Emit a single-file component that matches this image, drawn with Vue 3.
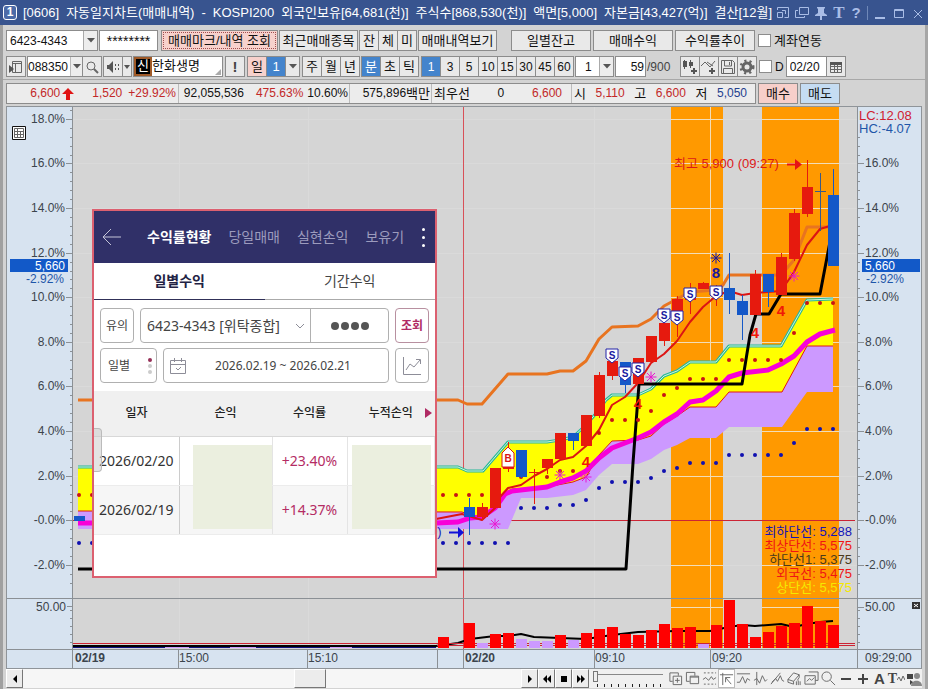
<script setup>
import { ref } from 'vue'

const titleParts = ['[0606]', '자동일지차트(매매내역)', '-', 'KOSPI200', '외국인보유[64,681(천)]', '주식수[868,530(천)]', '액면[5,000]', '자본금[43,427(억)]', '결산[12월]']
const minutes = ['1', '3', '5', '10', '15', '30', '45', '60']
const minute = ref('1')
const linked = ref(false)
const dated = ref(false)
const zoomLevel = ref(0)

const levels = [18, 16, 14, 12, 10, 8, 6, 4, 2, 0, -2]
const levelY = (p) => Math.round(520.3 - p * 22.3)
const levelText = (p) => (p === 0 ? '-0.0%' : p.toFixed(1) + '%')
const minorY = []
for (let i = -7; i <= 46; i++) minorY.push(Math.round(520.3 - i * 8.92))
const volY = [610, 618, 626, 634, 642]

// x, open/close edges, wick ends, rising?
const candles = [
  [469, 507, 517, 498, 535, 0], [482, 507, 517, 503, 520, 1], [495, 468, 508, 468, 508, 1], [508, 457, 469, 442, 472, 1],
  [521, 450, 477, 450, 478, 0], [547, 459, 468, 459, 474, 1], [560, 433, 459, 433, 459, 1], [573, 433, 441, 433, 450, 0],
  [586, 415, 446, 415, 446, 1], [599, 375, 416, 372, 418, 1], [612, 361, 376, 361, 380, 1], [625, 362, 385, 362, 393, 0],
  [638, 358, 384, 358, 384, 1], [651, 336, 362, 336, 362, 1], [664, 323, 341, 320, 346, 1], [677, 299, 311, 296, 337, 1],
  [690, 290, 300, 283, 314, 1], [703, 283, 289, 282, 289, 1], [716, 288, 296, 285, 306, 1], [729, 288, 300, 253, 314, 0],
  [742, 301, 315, 295, 340, 0], [755, 274, 315, 270, 315, 1], [768, 274, 292, 274, 307, 0], [781, 257, 295, 253, 295, 1],
  [794, 213, 259, 209, 261, 1], [807, 187, 214, 160, 217, 1], [833, 195, 266, 169, 266, 0]
]
const sells = [[612, 349], [625, 367], [638, 363], [664, 309], [677, 311], [690, 288], [716, 286]]
const fours = [[586, 467], [638, 409], [755, 338], [781, 316]]
const stars = [[495, 524], [560, 475], [586, 477], [651, 377], [794, 276]]

const xs = (a, n) => Array.from({ length: n }, (_, i) => a + i * 13)
const lowDots = [
  [79, 543], [92, 543], ...xs(443, 6).map((x) => [x, 543]), ...xs(521, 3).map((x) => [x, 508]), [560, 505], [573, 505],
  [586, 500], [599, 488], [612, 482], [625, 482], [638, 482], [651, 478], [664, 471], [677, 468], [690, 463], [703, 463],
  [716, 463], ...xs(729, 5).map((x) => [x, 455]), [794, 443], [807, 429], [820, 429], [833, 429]
]
const highDots = [
  [79, 495], [92, 495], ...xs(443, 4).map((x) => [x, 495]), [521, 477], [547, 477], [560, 471], [573, 471], [599, 433],
  [612, 420], [625, 420], [638, 420], [651, 411], [664, 395], [677, 388], [690, 379], [703, 379], [716, 379],
  ...xs(729, 5).map((x) => [x, 360]), [794, 333], [807, 303], [820, 303], [833, 303]
]
const volumes = [
  [443, 637, 1], [469, 623, 1], [482, 643, 0], [495, 634, 1], [508, 633, 1], [521, 639, 0], [534, 641, 0], [547, 641, 0],
  [560, 635, 1], [573, 640, 0], [586, 633, 1], [599, 629, 1], [612, 627, 1], [625, 634, 1], [638, 635, 1], [651, 630, 1],
  [664, 624, 1], [677, 628, 1], [690, 627, 1], [703, 644, 0], [716, 625, 1], [729, 600, 1], [742, 624, 1], [755, 637, 1],
  [768, 632, 1], [781, 626, 1], [794, 623, 1], [807, 606, 1], [820, 621, 1], [833, 625, 1]
]

const upper = '458,467 467,471 483,471 508,442 547,442 560,440 573,437 586,425 599,410 606,400 612,395 638,395 651,389 664,376 677,371 690,362 716,362 729,346 781,346 807,300 833,299'
const lower = '833,346 807,346 782,392 729,392 716,407 690,407 677,416 664,424 651,436 638,440 612,441 599,455 586,477 573,482 547,487 512,489 495,508 482,519 462,512'

const times = [
  [75, '02/19', true], [179, '15:00', false], [308, '15:10', false], [465, '02/20', true], [595, '09:10', false], [712, '09:20', false]
]
const legend = [
  [536, '#1414b8', '최하단선: 5,288'], [550, '#f01414', '최상단선: 5,575'], [564, '#4a3a1c', '하단선1: 5,375'],
  [578, '#f01414', '외국선: 5,475'], [592, '#f5e800', '상단선: 5,575']
]

const tools = [
  ['창 추가', 'M2 2h9v3M2 2v9h3M5.5 5.5h9v9h-9zM10 7.500v5M7.500 10h5'],
  ['창 복사', 'M5 11H1.500V1.500h9V5M5.500 5.500h9v8h-9zM5.500 6.500h9'],
  ['추세', 'M2 2h2m2 0h2m2 0h2m2 0h1M2 14h2m2 0h2m2 0h2m2 0h1M1 9l3-2 3 3 3-4 2 3 3-2'],
  ['기준', 'M1 4h14M4 2v13M7 7h5M7 7v5M7 7l6 7'],
  ['수평', 'M1 3h14M1 12h3l3-6 3 7 2-5 3 2'],
  ['수직', 'M4 1v14M1 10l3-2 3 5 3-8 3 6 2-2'],
  ['사선', 'M1 14L11 2M2 12l4-4 2 3 3-6 2 5 2 1'],
  ['모두 지우기', 'M1 9l6-7 6 2-6 7zM1 9v3l6 2v-3M13 4v3l-2 3M10 11v4M12 10v5M14 11v4'],
  ['저장', 'M5 1h10v9h-3M1 5h11v9H1zM3 11l3-3 2 2 3-3'],
  ['돋보기', 'M11 6a5 5 0 1 1-10 0 5 5 0 0 1 10 0zM10 10l5 5'],
  ['축소', ''], ['확대', ''], ['글자', ''], ['서식', ''], ['사용자', '']
]
</script>

<template>
  <div class="window">
    <header class="titlebar">
      <span class="num">1</span>
      <h1><span v-for="p in titleParts" :key="p">{{ p }}</span></h1>
      <div class="winbtns">
        <button aria-label="창 크기"><svg width="14" height="14" viewBox="0 0 14 14"><path d="M1.500 4V1.500h11v10h-4M1.500 6.500h5v5h-5zM6 4.500h3.500V8" /></svg></button>
        <button aria-label="복제"><svg width="14" height="14" viewBox="0 0 14 14"><path d="M4.500 1.500h9v7h-9zM3 4.500H.5v7h9V10" /></svg></button>
        <button aria-label="고정"><svg width="14" height="14" viewBox="0 0 14 14"><path class="fill" d="M3 1h8v1l-1 1v4l3 2v1H8v4H6v-4H1V9l3-2V3L3 2z" /></svg></button>
        <button class="glyph">T</button>
        <button class="glyph q">?</button>
        <i class="bar"></i>
        <button aria-label="최소화"><svg width="14" height="14" viewBox="0 0 14 14"><path class="thick" d="M2 12h10" /></svg></button>
        <button aria-label="최대화"><svg width="14" height="14" viewBox="0 0 14 14"><path d="M2.500 3.500h9v8h-9zM2 4.500h10" /></svg></button>
        <button aria-label="닫기"><svg width="14" height="14" viewBox="0 0 14 14"><path d="M3 4l8 8M11 4l-8 8" /></svg></button>
      </div>
    </header>

    <div class="body">
      <div class="row">
        <label class="combo account">
          <select aria-label="계좌번호"><option>6423-4343</option></select>
          <span class="arrow"><svg width="8" height="5"><path d="M0 0h8L4 4.500z" /></svg></span>
        </label>
        <input class="box pin" aria-label="비밀번호" value="********" />
        <button class="btn mark">매매마크/내역 조회</button>
        <button class="btn recent">최근매매종목</button>
        <div class="group"><button class="sq">잔</button><button class="sq">체</button><button class="sq">미</button></div>
        <button class="btn recent">매매내역보기</button>
        <div class="trio">
          <button class="btn wide">일별잔고</button><button class="btn wide">매매수익</button><button class="btn wide">수익률추이</button>
        </div>
        <label class="check link"><input v-model="linked" type="checkbox" />계좌연동</label>
      </div>

      <div class="row second">
        <button class="sq solo" aria-label="목록"><svg width="16" height="16" viewBox="0 0 16 16"><path class="st" d="M4.500 2.500h9v11h-9zM5 4.500h9M7.500 4v9" /><path d="M1 6l5 4-5 4z" /></svg></button>
        <div class="group stock">
          <label class="combo code"><select aria-label="종목코드"><option>088350</option></select><span class="arrow flat"><svg width="8" height="5"><path d="M0 0h8L4 4.500z" /></svg></span></label>
          <button class="sq" aria-label="종목 검색"><svg width="14" height="14" viewBox="0 0 14 14"><circle class="st" cx="6" cy="6" r="4" /><path class="st thick" d="M9 9l4 4" /></svg></button>
        </div>
        <div class="group">
          <button class="sq" aria-label="소리"><svg width="16" height="14" viewBox="0 0 16 14"><path d="M2 5h2l4-4v12L4 9H2zM10 4h1v2h-1zM10 8h1v2h-1zM13 4h1v2h-1zM13 8h1v2h-1z" /></svg></button>
          <button class="mini" aria-label="소리 선택"><svg width="6" height="4"><path d="M0 0h6L3 4z" /></svg></button>
        </div>
        <div class="name"><b>신</b><span>한화생명</span><i></i></div>
        <button class="sq solo bang">!</button>
        <div class="group period">
          <button class="sq pink">일</button><button class="sq on">1</button>
          <button class="mid" aria-label="주기"><svg width="8" height="5"><path d="M0 0h8L4 4.500z" /></svg></button>
        </div>
        <div class="group"><button class="sq">주</button><button class="sq">월</button><button class="sq">년</button></div>
        <div class="group"><button class="sq on">분</button><button class="sq">초</button><button class="sq">틱</button></div>
        <div class="group mins">
          <button v-for="m in minutes" :key="m" class="sq" :class="{ on: minute === m }" @click="minute = m">{{ m }}</button>
        </div>
        <label class="combo unit"><select aria-label="단위"><option>1</option></select><span class="arrow"><svg width="8" height="5"><path d="M0 0h8L4 4.500z" /></svg></span></label>
        <div class="count"><input class="box" aria-label="표시 개수" value="59" /><span>/900</span></div>
        <div class="group">
          <button class="sq" aria-label="봉 추가"><svg width="16" height="16" viewBox="0 0 16 16"><path d="M1 2h4v6H1zM2 1h1v9H2zM7 3h4v4H7zM8 1h1v8H8zM11 9h2v2h2v2h-2v2h-2v-2H9v-2h2z" /></svg></button>
          <button class="sq" aria-label="지표 추가"><svg width="16" height="16" viewBox="0 0 16 16"><path class="st" d="M0 7l4-4 5 5 5-6M6 3l6 4" /><path d="M10 9h2v2h2v2h-2v2h-2v-2H8v-2h2z" /></svg></button>
          <button class="sq" aria-label="저장"><svg width="16" height="16" viewBox="0 0 16 16"><path class="st" d="M1.500 1.500h11l2 2v11h-13zM4.500 2v5h7V2M3.500 14v-4.500h9V14M9.500 3v3" /></svg></button>
          <button class="sq" aria-label="설정"><svg width="16" height="16" viewBox="0 0 16 16"><circle class="st gear" cx="8" cy="8" r="4" /><circle class="st teeth" cx="8" cy="8" r="6" /></svg></button>
        </div>
        <div class="group date">
          <label class="check"><input v-model="dated" type="checkbox" />D</label>
          <input class="box" aria-label="날짜" value="02/20" />
          <button class="sq cal" aria-label="달력"><svg width="14" height="14" viewBox="0 0 14 14"><path class="st" d="M1.500 3.500h11v9h-11zM2 6.500h10M2 9.500h10M5.500 5v7M8.500 5v7" /><path d="M1 2h12v3H1z" /></svg></button>
        </div>
      </div>

      <div class="row quote">
        <div class="prices">
          <span class="cell c1 red"><b>6,600</b><svg width="12" height="12"><path d="M6 0l6 6H8v6H4V6H0z" /></svg><b class="diff">1,520</b><b>+29.92%</b></span>
          <span class="cell c2"><b>92,055,536</b><b class="red">475.63%</b><b>10.60%</b></span>
          <span class="cell c3">575,896<em>백만</em></span>
          <span class="cell c4"><em>최우선</em><b>0</b><b class="red">6,600</b></span>
          <span class="cell c5"><em>시</em><b class="red">5,110</b><em>고</em><b class="red">6,600</b><em>저</em><b class="blue">5,050</b></span>
        </div>
        <button class="btn buy">매수</button><button class="btn sell">매도</button>
      </div>

      <main class="chart">
        <svg class="axis" viewBox="7 107 66 561" width="66" height="561">
          <rect class="sky" x="7" y="107" width="66" height="561" />
          <path class="rule" d="M72.500 107V668M7 598.500h66M7 649.500h66" />
          <path v-for="y in minorY" :key="'m' + y" class="rule" :d="`M70 ${y}.5h3`" />
          <path v-for="y in volY" :key="'v' + y" class="rule" :d="`M70 ${y}.5h3`" />
          <path class="rule" d="M67 606.500h5" />
          <g v-for="p in levels" :key="p">
            <path class="rule" :d="`M66 ${levelY(p)}.5h6`" />
            <text class="lab end" x="65" :y="levelY(p) + 4">{{ levelText(p) }}</text>
          </g>
          <text class="lab end" x="66" y="611">50.00</text>
          <rect class="tag" x="10" y="259" width="58" height="13" />
          <text class="lab end light" x="65" y="270">5,660</text>
          <text class="lab end azure" x="64" y="283">-2.92%</text>
          <path class="gridbtn" d="M12.500 126.500h13v13h-13z" />
          <path class="gridin" d="M14.500 128.500h9v9h-9zM14.500 131.500h9M14.500 134.500h9M17.500 128v9M20.500 131v6" />
        </svg>

        <svg class="plot" viewBox="73 107 784 561" height="561" preserveAspectRatio="none">
          <rect x="73" y="107" width="784" height="542" fill="#d5d5d5" />
          <path d="M671 107h52v541h-52zM762 107h77v541h-77z" fill="#ff9900" />
          <path class="grid" d="M179.500 107v542M308.500 107v542M594.500 107v542" />
          <path v-for="p in levels" :key="p" class="grid" :d="`M73 ${levelY(p)}.500H857`" />
          <path class="bright" d="M710.500 107v542" />
          <path v-for="p in levels" :key="'b' + p" class="bright" :d="`M671 ${levelY(p)}.5h52M762 ${levelY(p)}.5h77`" />
          <path class="bright" d="M671 607.500h52M762 607.500h77" />

          <path class="redline" d="M73 520.500H855" />
          <path class="session" d="M463.500 107V649" />

          <polygon fill="#cc99ff" points="78,511 508,511 508,529 78,529" />
          <polygon fill="#cc99ff" :points="`${lower} 508,529 521,498 547,498 573,495 586,490 599,475 612,464 638,464 651,459 664,450 677,445 690,438 716,438 729,427 782,427 807,392 833,392`" />
          <polygon fill="#ffff00" :points="`78,467 ${upper} ${lower} 78,511`" />
          <polyline class="ln" stroke="#e01818" stroke-width="1" :points="`${lower} 78,511`" />
          <polyline class="ln" stroke="#27b89a" stroke-width="3" :points="`78,467 ${upper}`" />
          <polyline class="ln" stroke="#d4f5d4" stroke-width="1" :points="`78,467 ${upper}`" />

          <polyline class="ln" stroke="#e87420" stroke-width="3" points="78,400 458,400 467,404 482,404 508,374 547,374 560,371 573,371 586,361 599,339 612,327 638,326 651,319 664,306 677,299 690,292 716,290 723,285 729,275 781,275 794,260 807,227 828,227" />
          <polyline class="ln" stroke="#f800d8" stroke-width="5" points="78,523 436,523 458,522 470,518 482,517 495,508 505,494 512,491 547,487 560,482 573,478 586,471 599,458 612,448 625,443 638,438 651,432 664,422 677,414 690,402 703,400 716,391 729,377 742,373 768,370 781,364 794,356 807,342 820,334 835,330" />
          <polyline class="ln" stroke="#000" stroke-width="3" points="78,569 626,569 633,463 639,384 742,384 750,335 756,314 769,314 781,294 820,294 833,226" />
          <polyline class="ln" stroke="#dc1414" stroke-width="2" points="436,519 462,514 482,520 495,508 500,497 508,488 521,485 534,476 547,469 560,460 573,457 586,446 599,430 612,405 625,397 638,383 651,363 664,354 677,341 690,322 703,307 716,296 729,291 742,295 755,293 768,292 781,291 794,272 807,245 820,229 833,225" />

          <circle v-for="(d, i) in lowDots" :key="'l' + i" :cx="d[0]" :cy="d[1]" r="2" fill="#1010b0" />
          <circle v-for="(d, i) in highDots" :key="'h' + i" :cx="d[0]" :cy="d[1]" r="2" fill="#c81414" />

          <rect x="74" y="516" width="11" height="5" fill="#1458c8" />
          <g v-for="c in candles" :key="c[0]" :fill="c[5] ? '#e61a0e' : '#1458c8'">
            <rect :x="c[0]" :y="c[3]" width="1" :height="c[4] - c[3]" />
            <rect :x="c[0] - 5" :y="c[1]" width="11" :height="c[2] - c[1]" />
          </g>
          <path d="M534.500 469v35M529 472.500h11" stroke="#e61a0e" />
          <path d="M820.500 173v58M815 191.500h11" stroke="#3a5a88" />

          <path v-for="s in stars" :key="s[0]" class="star" :transform="`translate(${s[0]} ${s[1]})`" d="M-5.500 0h11M0-5.500v11M-4-4l8 8M4-4l-8 8" />
          <path class="star navy" transform="translate(716 258)" d="M-5.500 0h11M0-5.500v11M-4-4l8 8M4-4l-8 8" />
          <text class="big navyt" x="716" y="278">8</text>
          <text v-for="f in fours" :key="f[0]" class="big" :x="f[0]" :y="f[1]">4</text>
          <g v-for="s in sells" :key="s[0]" :transform="`translate(${s[0]} ${s[1]})`">
            <path d="M-6 0H6V9L0 14-6 9z" fill="#fff" stroke="#2222a8" />
            <text class="badge" x="0" y="10">S</text>
          </g>
          <path d="M502 467v-14l6-6 6 6v14z" fill="#fff" stroke="#d81414" />
          <text class="badge b" x="508" y="462">B</text>

          <text class="note" x="674" y="168">최고 5,900 (09:27)</text>
          <path d="M787 164.500h9" stroke="#e61414" stroke-width="2" /><path d="M795 159l7 5.500-7 5.500z" fill="#e61414" />
          <text class="note bl" x="430" y="536">0)</text>
          <path d="M449 532.500h9" stroke="#1010d8" stroke-width="2" /><path d="M458 527l6 5.500-6 5.500z" fill="#1010d8" />
          <text v-for="l in legend" :key="l[0]" class="legend" x="852" :y="l[0]" :fill="l[1]">{{ l[2] }}</text>

          <path d="M73 647h363" stroke="#101080" stroke-width="2" />
          <path d="M165 647h24M230 647h26M330 647h22" stroke="#cc99ff" stroke-width="2" />
          <polyline class="ln" stroke="#000" stroke-width="2" points="73,646 436,646 458,643 470,639 495,636 508,636 521,634 534,637 586,639 612,635 638,632 677,631 710,631 729,627 742,625 755,626 781,624 794,627 807,624 820,622 833,621" />
          <path class="redline" d="M73 643.500H855M437 645.500H855" />
          <rect v-for="v in volumes" :key="v[0]" :x="v[0] - 5" :y="v[1]" width="11" :height="648 - v[1]" :fill="v[2] ? '#ff0000' : '#cc99ff'" />
          <path class="rule" d="M73 598.500H857" />

          <rect class="sky" x="73" y="649" width="784" height="19" />
          <path class="rule" d="M73 649.500H857M178.500 649v19M307.500 649v19M437.500 649v19M463.500 649v19M594.500 649v19M710.500 649v19" />
          <text v-for="t in times" :key="t[0]" class="lab" :class="{ strong: t[2] }" :x="t[0]" y="662">{{ t[1] }}</text>
        </svg>

        <svg class="axis" viewBox="857 107 64 561" width="64" height="561">
          <rect class="sky" x="857" y="107" width="64" height="561" />
          <path class="rule" d="M857.500 107V668M857 598.500h65M857 649.500h65" />
          <path v-for="y in minorY.filter((v) => v > 132)" :key="'m' + y" class="rule" :d="`M857 ${y}.5h3`" />
          <path v-for="y in volY" :key="'v' + y" class="rule" :d="`M857 ${y}.5h3`" />
          <path class="rule" d="M857 607.500h7" />
          <g v-for="p in levels.slice(1)" :key="p">
            <path class="rule" :d="`M857 ${levelY(p)}.5h7`" />
            <text class="lab" x="865" :y="levelY(p) + 4">{{ levelText(p) }}</text>
          </g>
          <text class="lab" x="865" y="611">50.00</text>
          <rect class="tag" x="862" y="259" width="58" height="13" />
          <text class="lab light" x="865" y="270">5,660</text>
          <text class="lab azure" x="866" y="283">-2.92%</text>
          <text class="lab lead crimson" x="859" y="120">LC:12.08</text>
          <text class="lab lead azure" x="859" y="133">HC:-4.07</text>
          <text class="lab" x="865" y="662">09:29:00</text>
          <rect x="912" y="602" width="8" height="7" fill="#333" /><path d="M914 604l4 3M918 604l-4 3" stroke="#fff" />
        </svg>

        <section class="phone">
          <nav class="top">
            <a href="#" aria-label="뒤로"><svg width="20" height="18"><path d="M19 9H2M9 1L1 9l8 8" /></svg></a>
            <a href="#" class="cur">수익률현황</a><a href="#">당일매매</a><a href="#">실현손익</a><a href="#">보유기</a>
            <button aria-label="더보기"><i></i><i></i><i></i></button>
          </nav>
          <div class="tabs"><button class="sel">일별수익</button><button>기간수익</button></div>
          <div class="form">
            <button class="f small">유의</button>
            <div class="f acct">
              <select aria-label="계좌"><option>6423-4343 [위탁종합]</option></select>
              <svg width="8" height="6"><path d="M0 1l4 4 4-4" /></svg>
              <span class="dots"><i></i><i></i><i></i><i></i></span>
            </div>
            <button class="f small wine">조회</button>
          </div>
          <div class="form lower">
            <button class="f kind">일별<span><i></i><i></i><i></i></span></button>
            <div class="f range">
              <svg width="16" height="16"><path d="M.5 2.500h15v13H.5zM1 6.500h14M4.500 0v4M11.500 0v4M6 10l2 2 3-3" /></svg>
              <input aria-label="조회 기간" value="2026.02.19 ~ 2026.02.21" />
            </div>
            <button class="f small" aria-label="차트"><svg width="20" height="20"><path d="M1.500 1v17.500H19M4 14l4-6 4 3 6-7M14 3.500h4.500V8" /></svg></button>
          </div>
          <table>
            <thead><tr><th>일자</th><th>손익</th><th>수익률</th><th class="last">누적손익<i></i></th></tr></thead>
            <tbody>
              <tr><td>2026/02/20</td><td></td><td class="gain">+23.40%</td><td></td></tr>
              <tr class="alt"><td>2026/02/19</td><td></td><td class="gain">+14.37%</td><td></td></tr>
            </tbody>
          </table>
          <span class="mask one"></span><span class="mask two"></span><span class="handle"></span>
        </section>
      </main>

      <footer class="bottom">
        <button class="raised" aria-label="왼쪽"><svg width="10" height="10"><path d="M7 1v8L3 5z" /></svg></button>
        <div class="track"><span class="thumb"></span></div>
        <button class="raised" aria-label="오른쪽"><svg width="10" height="10"><path d="M3 1v8l4-4z" /></svg></button>
        <button class="raised" aria-label="뒤로"><svg width="10" height="10"><path d="M5 1v8L1 5zM9 1v8L5 5z" /></svg></button>
        <button class="raised" aria-label="정지"><svg width="10" height="10"><path d="M2 2h6v6H2z" /></svg></button>
        <button class="raised" aria-label="앞으로"><svg width="10" height="10"><path d="M1 1v8l4-4zM5 1v8l4-4z" /></svg></button>
        <input v-model="zoomLevel" class="slide" type="range" min="0" max="10" aria-label="배율" />
        <div class="tools">
          <button v-for="(t, i) in tools" :key="t[0]" :aria-label="t[0]" :class="{ pressed: i === 3 }">
            <svg v-if="i < 10" width="15" height="15" viewBox="0 0 16 16"><path class="st" :d="t[1]" /></svg>
            <svg v-else-if="i === 10" width="16" height="16"><path d="M3 7h10v2H3z" /></svg>
            <svg v-else-if="i === 11" width="16" height="16"><path d="M3 7h4V3h2v4h4v2H9v4H7V9H3z" /></svg>
            <b v-else-if="i === 12">A</b>
            <span v-else-if="i === 13" class="tt">T<svg width="8" height="8"><path class="st" d="M0 5l2-3 2 4 2-5 2 4" /></svg></span>
            <svg v-else width="16" height="16"><path d="M1 3h6v5H1z" /><circle cx="11" cy="5" r="3" class="soft" /><path d="M5 15c0-7 11-7 11 0z" class="soft" /><path d="M4 9l3 2-3 3z" /></svg>
          </button>
        </div>
      </footer>
    </div>
  </div>
</template>

<style>
body { margin: 0; background: #d3d3d3; }
</style>

<style scoped>
* { box-sizing: border-box; }
.window { font: 12px/16px "Liberation Sans", "Noto Sans CJK KR", sans-serif; color: #111; background: #d3d3d3; border-right: 3px solid #a6a6a6; border-bottom: 1px solid #a0a0a0; }
button, input, select { font: inherit; color: inherit; margin: 0; padding: 0; border-radius: 0; min-width: 0; }
button { border: 0; background: none; display: flex; align-items: center; justify-content: center; }
.titlebar { height: 25px; margin-right: -3px; background: #38548f; color: #fff; display: flex; align-items: center; padding: 0 3px; }
.num { width: 14px; height: 15px; line-height: 13px; border: 1px solid #fff; border-radius: 3px; text-align: center; font-weight: bold; background: #4c6ba8; }
h1 { margin: 0 0 0 6px; font-size: 13px; font-weight: normal; display: flex; gap: 7px; white-space: nowrap; }
.winbtns { margin-left: auto; display: flex; gap: 5px; align-items: center; color: #a9bde6; }
.winbtns svg { fill: none; stroke: #a9bde6; display: block; }
.winbtns .fill { fill: #a9bde6; stroke: none; }
.thick { stroke-width: 2; }
.glyph { width: 12px; font: bold 17px/18px "Liberation Serif", serif; }
.q { font-family: "Liberation Sans", sans-serif; font-size: 15px; }
.bar { width: 1px; height: 14px; background: #6f88b8; }
.body { border-left: 3px solid #a0a0a0; padding: 5px 3px 1px; }
.row { display: flex; height: 21px; align-items: stretch; gap: 1px; font-size: 13px; white-space: nowrap; }
.second { margin-top: 5px; }
.btn, .sq, .mini, .mid, .box, .combo { height: 21px; border: 1px solid #8c8c8c; background: #e9e9e9; }
.box, .combo { background: #fff; font-size: 12px; padding: 0 3px; }
.box { min-width: 0; }
.combo { display: flex; padding: 0; }
.combo select { appearance: none; border: 0; background: none; flex: 1; padding: 0 0 0 3px; outline: none; }
.arrow { width: 14px; border-left: 1px solid #aaa; background: #ededed; display: flex; align-items: center; justify-content: center; flex: none; }
.row svg { fill: #555; flex: none; }
.row svg .st { fill: none; stroke: #666; }
.row svg .gear { stroke-width: 3; }
.row svg .teeth { stroke-width: 3; stroke-dasharray: 2 3; }
.account { width: 92px; }
.pin { width: 59px; text-align: center; font-size: 14px; }
.btn.mark { width: 117px; margin-left: 2px; background: #f7d1cc; outline: 1px dotted #a05050; outline-offset: -3px; }
.recent { width: 79px; }
.group { display: flex; }
.group > * + * { margin-left: -1px; }
.sq { width: 20px; }
.mini { width: 10px; }
.mid { width: 15px; }
.trio { display: flex; gap: 2px; margin-left: 13px; }
.wide { width: 80px; }
.check { display: flex; align-items: center; gap: 3px; margin-left: 1px; }
.check input { appearance: none; width: 13px; height: 13px; border: 1px solid #8c8c8c; background: #fff; }
.link { margin-left: 2px; }
.second .code { width: 56px; }
.combo.code select { padding-left: 0; }
.code .arrow { width: 12px; }
.flat { border-left: 1px solid #bbb; }
.name { width: 90px; border: 1px solid #8c8c8c; background: #fff; display: flex; align-items: stretch; position: relative; line-height: 18px; }
.name b { width: 18px; background: #000; border: 2px solid #a05a28; color: #fff; font-weight: normal; line-height: 14px; text-align: center; }
.name i { position: absolute; right: 1px; bottom: 1px; border: 3px solid; border-color: transparent #aaa #aaa transparent; }
.bang { font-weight: bold; font-size: 15px; margin-left: 1px; color: #444; }
.period { margin: 0 1px; }
.pink { background: #f7d1cc; }
.on { background: #4484cc; color: #fff; }
.mins { margin-left: 1px; font-size: 12px; }
.unit { width: 39px; }
.combo.unit select { padding-left: 9px; }
.count { display: flex; width: 64px; align-items: center; font-size: 12px; color: #444; gap: 1px; }
.count .box { width: 31px; text-align: right; padding-right: 1px; color: #111; }
.date { font-size: 12px; }
.group.date .box { width: 41px; margin-left: 2px; }
.quote { margin-top: 6px; position: relative; gap: 2px; }
.quote::before { content: ""; position: absolute; left: -3px; right: -3px; top: -4px; height: 1px; background: #a8a8a8; }
.prices { width: 750px; border: 1px solid #8c8c8c; background: #ececec; display: flex; font-size: 12px; line-height: 19px; }
.cell { display: flex; align-items: center; border-right: 1px solid #bbb; gap: 6px; }
.cell:last-child { border: 0; }
.cell b, .cell em { font-weight: normal; font-style: normal; }
.cell em { font-size: 13px; }
.red { color: #c22828; }
.red svg { fill: #e01414; margin-left: -4px; }
.blue { color: #24408e; }
.c1 { width: 172px; justify-content: flex-end; padding-right: 2px; }
.c1 .diff { margin-left: 12px; }
.c2 { width: 171px; justify-content: flex-end; padding-right: 1px; gap: 4px; }
.c2 .red { margin-left: 8px; }
.c3 { width: 82px; justify-content: flex-end; gap: 0; padding-right: 1px; }
.c4 { width: 140px; padding: 0 9px 0 2px; justify-content: space-between; }
.c5 { flex: 1; padding: 0 8px 0 2px; justify-content: space-between; }
.btn.buy { width: 40px; background: #f7cfca; }
.btn.sell { width: 40px; background: #c5dcf2; }

.chart { position: relative; display: flex; margin-top: 2px; border: 1px solid #8f9499; }
.chart > svg { display: block; flex: none; }
.chart > .plot { flex: 1; min-width: 0; }
.sky { fill: #d7e3f0; }
.rule { stroke: #8b9095; fill: none; }
.lab { font-size: 12px; fill: #3c444c; }
.lead { font-size: 13px; }
.end { text-anchor: end; }
.strong { font-weight: bold; }
.light { fill: #fff; }
.azure { fill: #1e56a8; }
.crimson { fill: #d02030; }
.tag { fill: #1259c8; }
.gridbtn { fill: #fff; stroke: #111; }
.gridin { fill: none; stroke: #666; }
.grid { stroke: #dadada; }
.bright { stroke: #f2ddb8; }
.redline { stroke: #cc2434; fill: none; }
.session { stroke: #d85058; fill: none; }
.ln { fill: none; stroke-linejoin: round; }
.star { stroke: #e818d0; }
.navy { stroke: #1818a0; }
.big { font-size: 15px; font-weight: bold; fill: #f01808; text-anchor: middle; }
.navyt { fill: #1818a0; }
.badge { font-size: 10px; font-weight: bold; fill: #1818a0; text-anchor: middle; }
.b { fill: #d81414; }
.note { font-size: 13px; fill: #dc1818; }
.bl { fill: #1818b8; }
.legend { font-size: 13px; text-anchor: end; }

.phone { position: absolute; left: 85px; top: 102px; width: 345px; height: 369px; background: #fff; border: 2px solid #dc6070; font: 14px/20px "Noto Sans", "Noto Sans CJK KR", sans-serif; color: #444; overflow: hidden; }
.top { height: 52px; background: #303068; display: flex; align-items: center; padding: 0 10px 0 8px; }
.top a { color: #9c9bbd; text-decoration: none; margin-right: 17px; white-space: nowrap; }
.top a:first-child { margin-right: 25px; height: 18px; }
.top a:last-of-type { margin-right: 0; }
.top a.cur { color: #fff; font-weight: bold; }
.top svg, .form svg { fill: none; stroke: #8d8d98; display: block; }
.top svg { stroke: #c4c4d8; }
.top button { flex-direction: column; gap: 5px; margin-left: auto; }
.top button i { width: 3px; height: 3px; border-radius: 50%; background: #fff; }
.tabs { display: flex; height: 37px; }
.tabs button { flex: 1; border-bottom: 1px solid #aaa; }
.tabs .sel { font-weight: bold; color: #222244; border-color: #303058; }
.form { display: flex; gap: 6px; padding: 8px 6px 0; }
.lower { padding-top: 5px; }
.f { height: 35px; border: 1px solid #b0b0b0; border-radius: 4px; font-size: 12px; background: #fff; }
.small { width: 34px; flex: none; }
.wine { color: #b02a64; border-color: #b890a0; font-weight: bold; }
.acct { flex: 1; display: flex; align-items: center; }
.acct select { appearance: none; border: 0; background: none; font-size: 14px; width: 155px; padding-left: 6px; }
.acct svg { margin-right: 6px; }
.dots { flex: 1; align-self: stretch; border-left: 1px solid #b0b0b0; display: flex; align-items: center; justify-content: center; gap: 2px; }
.dots i { width: 8px; height: 8px; border-radius: 50%; background: #555; }
.kind { width: 57px; justify-content: space-between; padding: 0 4px 0 7px; }
.kind span { display: grid; gap: 2px; }
.kind i { width: 4px; height: 4px; border-radius: 50%; background: #ccc; }
.kind i:first-child { background: #963058; }
.range { flex: 1; display: flex; align-items: center; padding: 0 8px 0 6px; }
.range input { flex: 1; border: 0; background: none; text-align: center; }
table { width: 341px; border-collapse: collapse; table-layout: fixed; margin-top: 8px; }
th { height: 45px; padding: 0; background: #f0f0f0; font-size: 12px; font-weight: 500; color: #222; border-bottom: 1px solid #d8d8d8; }
th:first-child { width: 85px; }
th:nth-child(2) { width: 93px; }
th:nth-child(3) { width: 75px; }
.last { position: relative; }
.last i { position: absolute; right: 3px; top: 17px; border: 5px solid transparent; border-left: 7px solid #b02a64; border-right: 0; }
td { height: 49px; padding: 0; text-align: center; border-right: 1px solid #e4e4e4; border-bottom: 1px solid #ececec; }
td:first-child { color: #333; border-right-color: #ccc; }
.alt { background: #f6f6f6; }
td.gain { color: #b42c64; }
.mask { position: absolute; top: 234px; width: 79px; height: 84px; background: #ebefdf; }
.one { left: 99px; }
.two { left: 258px; }
.handle { position: absolute; left: 0; top: 217px; width: 8px; height: 44px; border-radius: 0 4px 4px 0; border: 1px solid #bbb; border-left: 0; background: rgba(200, 200, 200, 0.5); }

.bottom { display: flex; align-items: stretch; height: 19px; background: #f0f0f0; }
.raised { width: 17px; border: 1px solid; border-color: #fff #777 #777 #fff; background: #ececec; flex: none; }
.track { flex: 1; background: #f6f6f6; padding-left: 271px; }
.thumb { display: block; width: 32px; height: 19px; border: 1px solid; border-color: #fff #777 #777 #fff; background: #ececec; }
.slide { appearance: none; width: 70px; margin: 0 4px; background: repeating-linear-gradient(90deg, #222 0 1px, transparent 1px 7px) 4px 15px / 66px 3px no-repeat, linear-gradient(#888, #888) 0 5px / 100% 1px no-repeat; }
.slide::-webkit-slider-thumb { appearance: none; width: 5px; height: 11px; margin-top: -4px; background: #eee; border: 1px solid #777; }
.tools { display: flex; }
.tools button { width: 17px; color: #444; }
.tools svg { fill: #444; flex: none; }
.tools .st { fill: none; stroke: #666; }
.tools .soft { fill: #888; }
.tools b { font-size: 15px; }
.tt { display: flex; font: bold 14px/16px "Liberation Serif", serif; align-items: center; }
.tools .pressed { background: #fff; border: 1px solid #bbb; }
</style>
